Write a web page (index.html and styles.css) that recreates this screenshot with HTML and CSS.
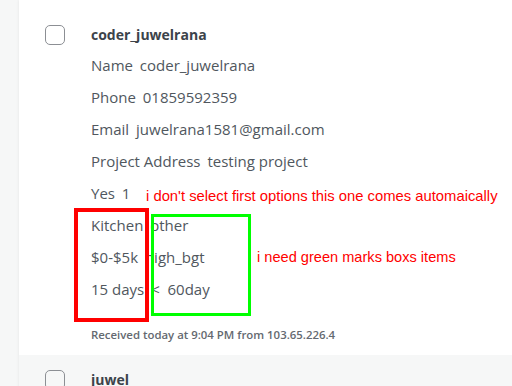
FILE: index.html
```
<!DOCTYPE html>
<html lang="en">
<head>
  <meta charset="UTF-8" />
  <meta name="viewport" content="width=device-width, initial-scale=1.0"/>
  <title>Form Entries</title>
  <link rel="stylesheet" href="styles.css">
</head>
<body>
  <div class="entries">
    <div class="entry">
      <span class="check"></span>
      <div class="entry-body">
        <div class="entry-title">coder_juwelrana</div>
        <div class="field"><span class="label">Name</span> coder_juwelrana</div>
        <div class="field"><span class="label">Phone</span> 01859592359</div>
        <div class="field"><span class="label">Email</span> juwelrana1581@gmail.com</div>
        <div class="field"><span class="label">Project Address</span> testing project</div>
        <div class="field"><span class="label">Yes</span> 1</div>
        <div class="field"><span class="label">Kitchen</span> other</div>
        <div class="field"><span class="label">$0-$5k</span> high_bgt</div>
        <div class="field"><span class="label">15 days</span> &lt;&nbsp; 60day</div>
        <div class="received">Received today at 9:04 PM from 103.65.226.4</div>
      </div>
    </div>
    <div class="entry entry-next">
      <span class="check"></span>
      <div class="entry-body">
        <div class="entry-title">juwel</div>
      </div>
    </div>
  </div>

  <!-- screenshot markup -->
  <div class="mark mark-red"></div>
  <div class="mark mark-green"></div>
  <div class="note note-first">i don't select first options this one comes automaically</div>
  <div class="note note-second">i need green marks boxs items</div>
</body>
</html>
```

FILE: styles.css
```
body {
  margin: 0;
  padding-left: 19px;
  background-color: #f6f7f7;
  font-family: 'Open Sans', 'Noto Sans', sans-serif;
  color: #50575e;
  height: 386px;
  overflow: hidden;
}

.entries {
  background-color: #fff;
  box-shadow: 0 0 3px rgba(0, 0, 0, 0.08);
  min-height: 386px;
}

.entry {
  display: flex;
  padding: 25px 0 12px 26px;
}

.entry-next {
  background-color: #f6f7f7;
  padding-top: 15px;
}

.check {
  flex: none;
  width: 18px;
  height: 18px;
  border: 1px solid #8c8f94;
  border-radius: 5px;
  margin-right: 26px;
}

.entry-title {
  font-size: 14px;
  font-weight: 700;
  line-height: 20px;
  color: #3c434a;
  margin-bottom: 4px;
}

.field {
  font-size: 15px;
  line-height: 32px;
  white-space: nowrap;
}

.label {
  margin-right: 3px;
}

.received {
  margin-top: 22px;
  font-size: 11.4px;
  font-weight: 600;
  line-height: 16px;
  color: #646970;
}

.mark {
  position: absolute;
  box-sizing: border-box;
}

.mark-red {
  left: 74px;
  top: 208px;
  width: 75px;
  height: 114px;
  border: 4px solid #ff0000;
}

.mark-green {
  left: 151px;
  top: 214px;
  width: 100px;
  height: 102px;
  border: 3px solid #00ff00;
}

.note {
  position: absolute;
  font-family: 'Liberation Sans', sans-serif;
  color: #ff0000;
  white-space: nowrap;
}

.note-first {
  left: 146px;
  top: 188px;
  font-size: 14.8px;
}

.note-second {
  left: 257px;
  top: 249px;
  font-size: 14.6px;
}
```
